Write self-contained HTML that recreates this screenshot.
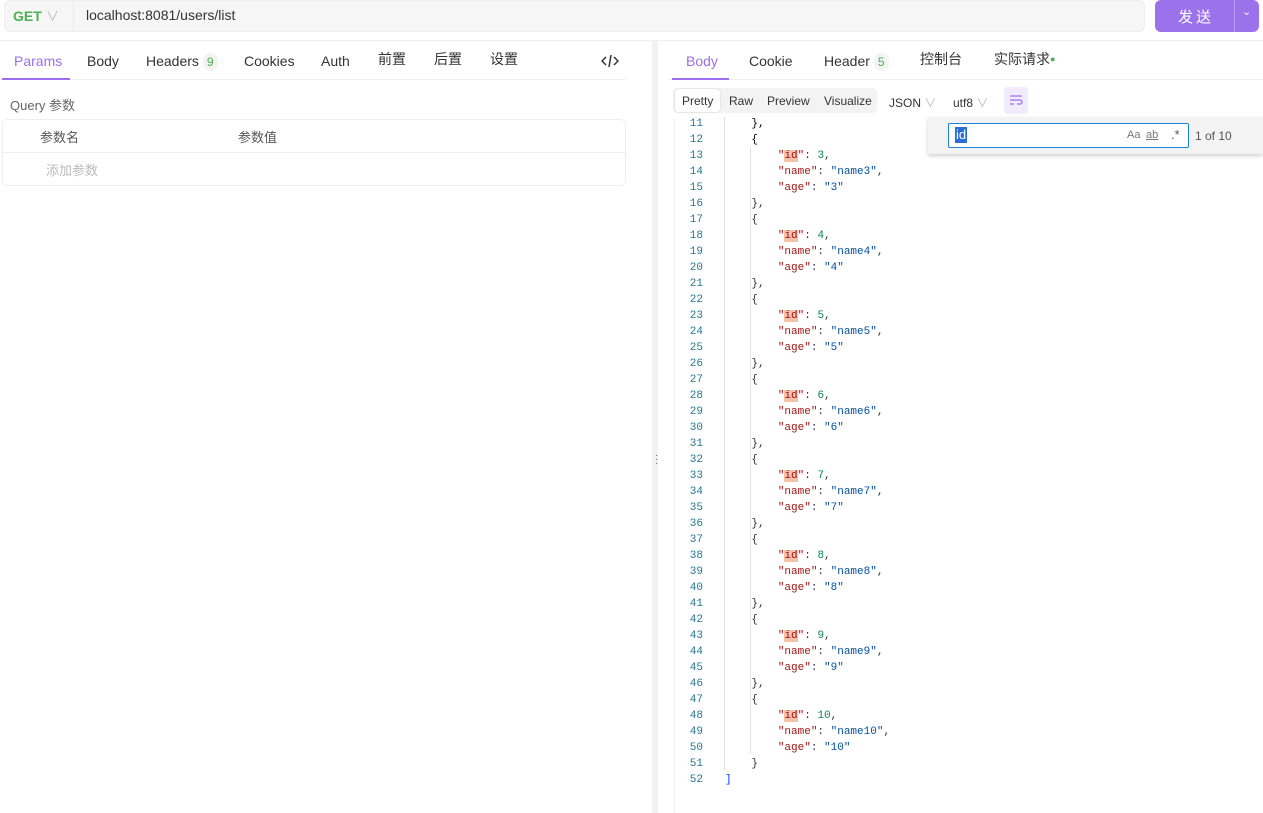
<!DOCTYPE html>
<html><head><meta charset="utf-8"><style>
*{box-sizing:border-box;margin:0;padding:0}
body{width:1263px;height:813px;overflow:hidden;background:#fff;font-family:"Liberation Sans","Noto Sans CJK SC",sans-serif;font-size:14px;color:#333;position:relative}
.a{position:absolute}
.tab{position:absolute;top:52px;font-size:14px;line-height:18px;color:#333;white-space:nowrap}
.badge{display:inline-block;background:#f3f3f3;color:#4caf50;font-size:12px;border-radius:9px;padding:0 4px;margin-left:4px}
.code{position:absolute;left:675px;top:117px;width:588px;height:696px;overflow:hidden}
.lines{position:absolute;left:0;top:-1px;font-family:"Liberation Mono",monospace;font-size:11px;line-height:16px}
.ln{display:block;height:16px;white-space:pre}
.n{display:inline-block;width:28px;text-align:right;color:#237893;margin-right:22px}
.k{color:#a31515}.s{color:#0451a5}.d{color:#098658}.p{color:#000}
.hl{background:#f6c1a6}
</style></head><body>
<div class="a" style="left:4px;top:0;width:1141px;height:32px;background:#f6f6f6;border-radius:6px;border:1px solid #eee"></div>
<div class="a" style="left:13px;top:8px;font-weight:bold;color:#4caf50;font-size:14px">GET</div>
<div class="a" style="left:46px;top:6px;color:#bbb;font-size:13px">&#8744;</div>
<div class="a" style="left:73px;top:1px;width:1px;height:30px;background:#eaeaea"></div>
<div class="a" style="left:86px;top:7px;font-size:14px;color:#333">localhost:8081/users/list</div>
<div class="a" style="left:1155px;top:0;width:104px;height:32px;background:#9b72ec;border-radius:6px"></div>
<div class="a" style="left:1234px;top:0;width:1px;height:32px;background:#b89af2"></div>
<div class="a" style="left:1178px;top:6px;color:#fff;font-size:15px;letter-spacing:3px">发送</div>
<div class="a" style="left:1242px;top:5px;color:#fff;font-size:11px">&#8964;</div>
<div class="a" style="left:0;top:40px;width:1263px;height:1px;background:#f0f0f0"></div>
<div class="tab" style="left:14px;color:#9b6ff0">Params</div>
<div class="tab" style="left:87px">Body</div>
<div class="tab" style="left:146px">Headers<span class="badge">9</span></div>
<div class="tab" style="left:244px">Cookies</div>
<div class="tab" style="left:321px">Auth</div>
<div class="tab" style="left:378px;top:50px">前置</div>
<div class="tab" style="left:434px;top:50px">后置</div>
<div class="tab" style="left:490px;top:50px">设置</div>
<svg class="a" style="left:601px;top:54px" width="18" height="14" viewBox="0 0 18 14"><path d="M5 3L1 7l4 4M13 3l4 4-4 4M10 1L8 13" stroke="#333" stroke-width="1.5" fill="none"/></svg>
<div class="a" style="left:2px;top:79px;width:624px;height:1px;background:#eee"></div>
<div class="a" style="left:2px;top:78px;width:68px;height:2px;background:#9b6ff0"></div>
<div class="a" style="left:10px;top:95px;color:#666;font-size:13px">Query 参数</div>
<div class="a" style="left:2px;top:119px;width:624px;height:67px;border:1px solid #eee;border-radius:5px"></div>
<div class="a" style="left:2px;top:152px;width:624px;height:1px;background:#eee"></div>
<div class="a" style="left:40px;top:127px;color:#555;font-size:13px">参数名</div>
<div class="a" style="left:238px;top:127px;color:#555;font-size:13px">参数值</div>
<div class="a" style="left:46px;top:160px;color:#bbb;font-size:13px">添加参数</div>
<div class="a" style="left:652px;top:41px;width:6px;height:772px;background:#f2f2f4"></div>
<div class="a" style="left:655px;top:454px;color:#666;font-size:10px;line-height:4px">·<br>·<br>·</div>
<div class="tab" style="left:686px;color:#9b6ff0">Body</div>
<div class="tab" style="left:749px">Cookie</div>
<div class="tab" style="left:824px">Header<span class="badge">5</span></div>
<div class="tab" style="left:920px;top:50px">控制台</div>
<div class="tab" style="left:994px;top:50px">实际请求<span style="color:#4caf50;font-size:9px;vertical-align:2px">●</span></div>
<div class="a" style="left:668px;top:79px;width:595px;height:1px;background:#eee"></div>
<div class="a" style="left:672px;top:78px;width:57px;height:2px;background:#9b6ff0"></div>
<div class="a" style="left:673px;top:88px;width:204px;height:25px;background:#f3f3f3;border-radius:4px"></div>
<div class="a" style="left:675px;top:89px;width:45px;height:23px;background:#fff;border-radius:4px;box-shadow:0 0 2px rgba(0,0,0,.15)"></div>
<div class="a" style="left:682px;top:94px;font-size:12px;color:#333">Pretty</div>
<div class="a" style="left:729px;top:94px;font-size:12px;color:#333">Raw</div>
<div class="a" style="left:767px;top:94px;font-size:12px;color:#333">Preview</div>
<div class="a" style="left:824px;top:94px;font-size:12px;color:#333">Visualize</div>
<div class="a" style="left:889px;top:94px;font-size:12px;color:#333">JSON <span style="color:#bbb">&#8744;</span></div>
<div class="a" style="left:953px;top:94px;font-size:12px;color:#333">utf8 <span style="color:#bbb">&#8744;</span></div>
<div class="a" style="left:1004px;top:87px;width:24px;height:27px;background:#f1ebfd;border-radius:4px"></div>
<svg class="a" style="left:1009px;top:94px" width="14" height="12" viewBox="0 0 14 12"><path d="M1 2h12M1 6h10a2 2 0 0 1 0 4H8M1 10h4" stroke="#9b6ff0" stroke-width="1.3" fill="none"/></svg>
<div class="a" style="left:674px;top:117px;width:1px;height:696px;background:#f0f0f0"></div>
<div class="a" style="left:724px;top:117px;width:1px;height:654px;background:#ddd"></div>
<div class="a" style="left:750px;top:146px;width:1px;height:608px;background:#e4e4e4"></div>
<div class="code"><div class="lines">
<span class="ln"><span class="n">11</span><span class="p">    },</span></span>
<span class="ln"><span class="n">12</span><span class="p">    {</span></span>
<span class="ln"><span class="n">13</span>        <span class="k">"<span class="hl">id</span>"</span>: <span class="d">3</span>,</span>
<span class="ln"><span class="n">14</span>        <span class="k">"name"</span>: <span class="s">"name3"</span>,</span>
<span class="ln"><span class="n">15</span>        <span class="k">"age"</span>: <span class="s">"3"</span></span>
<span class="ln"><span class="n">16</span>    },</span>
<span class="ln"><span class="n">17</span>    {</span>
<span class="ln"><span class="n">18</span>        <span class="k">"<span class="hl">id</span>"</span>: <span class="d">4</span>,</span>
<span class="ln"><span class="n">19</span>        <span class="k">"name"</span>: <span class="s">"name4"</span>,</span>
<span class="ln"><span class="n">20</span>        <span class="k">"age"</span>: <span class="s">"4"</span></span>
<span class="ln"><span class="n">21</span>    },</span>
<span class="ln"><span class="n">22</span>    {</span>
<span class="ln"><span class="n">23</span>        <span class="k">"<span class="hl">id</span>"</span>: <span class="d">5</span>,</span>
<span class="ln"><span class="n">24</span>        <span class="k">"name"</span>: <span class="s">"name5"</span>,</span>
<span class="ln"><span class="n">25</span>        <span class="k">"age"</span>: <span class="s">"5"</span></span>
<span class="ln"><span class="n">26</span>    },</span>
<span class="ln"><span class="n">27</span>    {</span>
<span class="ln"><span class="n">28</span>        <span class="k">"<span class="hl">id</span>"</span>: <span class="d">6</span>,</span>
<span class="ln"><span class="n">29</span>        <span class="k">"name"</span>: <span class="s">"name6"</span>,</span>
<span class="ln"><span class="n">30</span>        <span class="k">"age"</span>: <span class="s">"6"</span></span>
<span class="ln"><span class="n">31</span>    },</span>
<span class="ln"><span class="n">32</span>    {</span>
<span class="ln"><span class="n">33</span>        <span class="k">"<span class="hl">id</span>"</span>: <span class="d">7</span>,</span>
<span class="ln"><span class="n">34</span>        <span class="k">"name"</span>: <span class="s">"name7"</span>,</span>
<span class="ln"><span class="n">35</span>        <span class="k">"age"</span>: <span class="s">"7"</span></span>
<span class="ln"><span class="n">36</span>    },</span>
<span class="ln"><span class="n">37</span>    {</span>
<span class="ln"><span class="n">38</span>        <span class="k">"<span class="hl">id</span>"</span>: <span class="d">8</span>,</span>
<span class="ln"><span class="n">39</span>        <span class="k">"name"</span>: <span class="s">"name8"</span>,</span>
<span class="ln"><span class="n">40</span>        <span class="k">"age"</span>: <span class="s">"8"</span></span>
<span class="ln"><span class="n">41</span>    },</span>
<span class="ln"><span class="n">42</span>    {</span>
<span class="ln"><span class="n">43</span>        <span class="k">"<span class="hl">id</span>"</span>: <span class="d">9</span>,</span>
<span class="ln"><span class="n">44</span>        <span class="k">"name"</span>: <span class="s">"name9"</span>,</span>
<span class="ln"><span class="n">45</span>        <span class="k">"age"</span>: <span class="s">"9"</span></span>
<span class="ln"><span class="n">46</span>    },</span>
<span class="ln"><span class="n">47</span>    {</span>
<span class="ln"><span class="n">48</span>        <span class="k">"<span class="hl">id</span>"</span>: <span class="d">10</span>,</span>
<span class="ln"><span class="n">49</span>        <span class="k">"name"</span>: <span class="s">"name10"</span>,</span>
<span class="ln"><span class="n">50</span>        <span class="k">"age"</span>: <span class="s">"10"</span></span>
<span class="ln"><span class="n">51</span>    }</span>
<span class="ln"><span class="n">52</span><span style="color:#0431fa">]</span></span>
</div></div>
<div class="a" style="left:928px;top:117px;width:335px;height:37px;background:#f3f3f3;box-shadow:0 2px 4px rgba(0,0,0,.18)"></div>
<div class="a" style="left:948px;top:123px;width:241px;height:25px;background:#fff;border:1px solid #1a85d8;border-radius:2px"></div>
<div class="a" style="left:955px;top:127px;height:16px;background:#2a6fd6;color:#fff;font-size:13px;line-height:16px;padding:0 1px">id</div>
<div class="a" style="left:1127px;top:129px;font-size:11px;color:#777">Aa</div>
<div class="a" style="left:1146px;top:129px;font-size:11px;color:#777;text-decoration:underline">ab</div>
<div class="a" style="left:1171px;top:127px;font-size:13px;color:#555">.*</div>
<div class="a" style="left:1195px;top:129px;font-size:12px;color:#555">1 of 10</div>
</body></html>
